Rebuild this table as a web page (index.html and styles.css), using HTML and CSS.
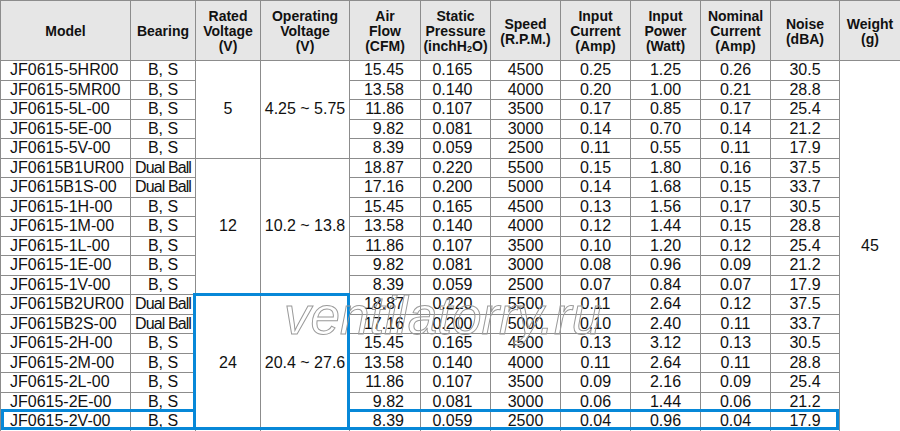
FILE: index.html
```html
<!DOCTYPE html>
<html>
<head>
<meta charset="utf-8">
<link rel="stylesheet" href="styles.css">
</head>
<body>
<div class="sheet">
<table class="spec">
<colgroup>
<col class="c-model"><col class="c-bear"><col class="c-rated"><col class="c-oper"><col class="c-air"><col class="c-stat"><col class="c-speed"><col class="c-cur"><col class="c-pow"><col class="c-nom"><col class="c-noise"><col class="c-wt">
</colgroup>
<thead>
<tr class="head">
<th>Model</th><th>Bearing</th><th>Rated<br>Voltage<br>(V)</th><th>Operating<br>Voltage<br>(V)</th><th>Air<br>Flow<br>(CFM)</th><th>Static<br>Pressure<br>(inchH<sub>2</sub>O)</th><th>Speed<br>(R.P.M.)</th><th>Input<br>Current<br>(Amp)</th><th>Input<br>Power<br>(Watt)</th><th>Nominal<br>Current<br>(Amp)</th><th>Noise<br>(dBA)</th><th>Weight<br>(g)</th>
</tr>
</thead>
<tbody>
<tr><td class="m">JF0615-5HR00</td><td>B, S</td><td rowspan="5">5</td><td rowspan="5">4.25 ~ 5.75</td><td class="a">15.45</td><td class="s">0.165</td><td>4500</td><td>0.25</td><td>1.25</td><td>0.26</td><td>30.5</td><td rowspan="19" class="w">45</td></tr>
<tr><td class="m">JF0615-5MR00</td><td>B, S</td><td class="a">13.58</td><td class="s">0.140</td><td>4000</td><td>0.20</td><td>1.00</td><td>0.21</td><td>28.8</td></tr>
<tr><td class="m">JF0615-5L-00</td><td>B, S</td><td class="a">11.86</td><td class="s">0.107</td><td>3500</td><td>0.17</td><td>0.85</td><td>0.17</td><td>25.4</td></tr>
<tr><td class="m">JF0615-5E-00</td><td>B, S</td><td class="a">9.82</td><td class="s">0.081</td><td>3000</td><td>0.14</td><td>0.70</td><td>0.14</td><td>21.2</td></tr>
<tr><td class="m">JF0615-5V-00</td><td>B, S</td><td class="a">8.39</td><td class="s">0.059</td><td>2500</td><td>0.11</td><td>0.55</td><td>0.11</td><td>17.9</td></tr>
<tr><td class="m">JF0615B1UR00</td><td class="dual">Dual Ball</td><td rowspan="7">12</td><td rowspan="7">10.2 ~ 13.8</td><td class="a">18.87</td><td class="s">0.220</td><td>5500</td><td>0.15</td><td>1.80</td><td>0.16</td><td>37.5</td></tr>
<tr><td class="m">JF0615B1S-00</td><td class="dual">Dual Ball</td><td class="a">17.16</td><td class="s">0.200</td><td>5000</td><td>0.14</td><td>1.68</td><td>0.15</td><td>33.7</td></tr>
<tr><td class="m">JF0615-1H-00</td><td>B, S</td><td class="a">15.45</td><td class="s">0.165</td><td>4500</td><td>0.13</td><td>1.56</td><td>0.17</td><td>30.5</td></tr>
<tr><td class="m">JF0615-1M-00</td><td>B, S</td><td class="a">13.58</td><td class="s">0.140</td><td>4000</td><td>0.12</td><td>1.44</td><td>0.15</td><td>28.8</td></tr>
<tr><td class="m">JF0615-1L-00</td><td>B, S</td><td class="a">11.86</td><td class="s">0.107</td><td>3500</td><td>0.10</td><td>1.20</td><td>0.12</td><td>25.4</td></tr>
<tr><td class="m">JF0615-1E-00</td><td>B, S</td><td class="a">9.82</td><td class="s">0.081</td><td>3000</td><td>0.08</td><td>0.96</td><td>0.09</td><td>21.2</td></tr>
<tr><td class="m">JF0615-1V-00</td><td>B, S</td><td class="a">8.39</td><td class="s">0.059</td><td>2500</td><td>0.07</td><td>0.84</td><td>0.07</td><td>17.9</td></tr>
<tr><td class="m">JF0615B2UR00</td><td class="dual">Dual Ball</td><td rowspan="7">24</td><td rowspan="7">20.4 ~ 27.6</td><td class="a">18.87</td><td class="s">0.220</td><td>5500</td><td>0.11</td><td>2.64</td><td>0.12</td><td>37.5</td></tr>
<tr><td class="m">JF0615B2S-00</td><td class="dual">Dual Ball</td><td class="a">17.16</td><td class="s">0.200</td><td>5000</td><td>0.10</td><td>2.40</td><td>0.11</td><td>33.7</td></tr>
<tr><td class="m">JF0615-2H-00</td><td>B, S</td><td class="a">15.45</td><td class="s">0.165</td><td>4500</td><td>0.13</td><td>3.12</td><td>0.13</td><td>30.5</td></tr>
<tr><td class="m">JF0615-2M-00</td><td>B, S</td><td class="a">13.58</td><td class="s">0.140</td><td>4000</td><td>0.11</td><td>2.64</td><td>0.11</td><td>28.8</td></tr>
<tr><td class="m">JF0615-2L-00</td><td>B, S</td><td class="a">11.86</td><td class="s">0.107</td><td>3500</td><td>0.09</td><td>2.16</td><td>0.09</td><td>25.4</td></tr>
<tr><td class="m">JF0615-2E-00</td><td>B, S</td><td class="a">9.82</td><td class="s">0.081</td><td>3000</td><td>0.06</td><td>1.44</td><td>0.06</td><td>21.2</td></tr>
<tr><td class="m">JF0615-2V-00</td><td>B, S</td><td class="a">8.39</td><td class="s">0.059</td><td>2500</td><td>0.04</td><td>0.96</td><td>0.04</td><td>17.9</td></tr>
</tbody>
</table>
<div class="hl hl-volt"></div>
<div class="hl hl-row-left"></div>
<div class="hl hl-row-right"></div>
<div class="watermark">ventilatorry.ru</div>
</div>
</body>
</html>
```
FILE: styles.css
```css
html, body {
  margin: 0;
  padding: 0;
  background: #ffffff;
}
.sheet {
  position: relative;
  width: 900px;
  height: 431px;
  overflow: hidden;
}
.spec {
  border-collapse: collapse;
  table-layout: fixed;
  width: 900px;
  font-family: "Liberation Sans", Arial, sans-serif;
  color: #111111;
}
.c-model { width: 130px; }
.c-bear { width: 65px; }
.c-rated { width: 65px; }
.c-oper { width: 89px; }
.c-air { width: 71px; }
.c-stat { width: 70px; }
.c-speed { width: 70px; }
.c-cur { width: 70px; }
.c-pow { width: 70px; }
.c-nom { width: 70px; }
.c-noise { width: 69px; }
.c-wt { width: 61px; }
.spec th, .spec td {
  border: 1px solid #8c8c8c;
  padding: 0;
  text-align: center;
  vertical-align: middle;
  white-space: nowrap;
  overflow: hidden;
}
.spec th {
  background: #e6e6e6;
  font-size: 14px;
  font-weight: bold;
  line-height: 15px;
  padding-top: 2px;
}
.spec th sub {
  font-size: 9px;
  vertical-align: -1px;
  line-height: 0;
}
.head { height: 60px; }
.spec tbody tr { height: 19.5px; }
.spec td {
  font-size: 16px;
  line-height: 18px;
}
.spec td.m {
  text-align: left;
  padding-left: 9px;
}
.spec td.a {
  text-align: right;
  padding-right: 16px;
}
.spec td.s {
  padding-right: 6px;
}
.spec td.dual {
  letter-spacing: -0.9px;
}
.hl {
  position: absolute;
  box-sizing: border-box;
  border: 3px solid #0788d8;
}
.hl-volt {
  left: 193px;
  top: 293px;
  width: 157px;
  height: 137px;
}
.hl-row-left {
  left: 1px;
  top: 409px;
  width: 195px;
  height: 21px;
  border-right: none;
}
.hl-row-right {
  left: 347px;
  top: 409px;
  width: 492px;
  height: 21px;
  border-left: none;
}
.watermark {
  position: absolute;
  left: 284px;
  top: 289px;
  font-family: "Liberation Sans", Arial, sans-serif;
  font-style: italic;
  font-size: 53px;
  line-height: 53px;
  color: transparent;
  -webkit-text-stroke: 1px #9a9a9a;
  white-space: nowrap;
  pointer-events: none;
}
```
